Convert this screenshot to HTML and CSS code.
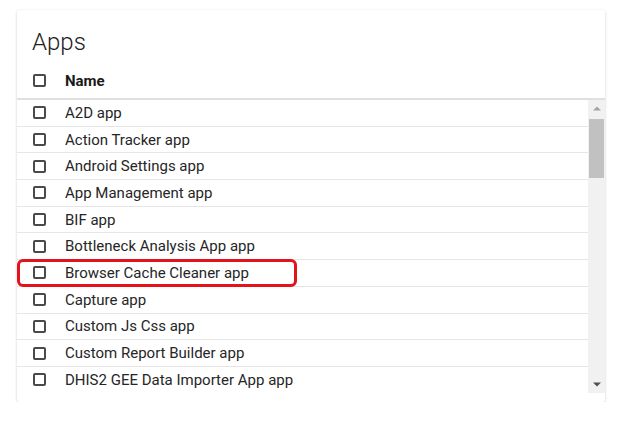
FILE: index.html
```html
<!DOCTYPE html>
<html lang="en">
<head>
<meta charset="utf-8">
<title>Apps</title>
<link rel="stylesheet" href="styles.css">
</head>
<body>
<div class="card">
  <h1 class="title">Apps</h1>
  <div class="head">
    <span class="cb"></span>
    <span class="head-label">Name</span>
  </div>
  <div class="body">
    <div class="list">
      <div class="row"><span class="cb"></span><span class="label">A2D app</span></div>
      <div class="row"><span class="cb"></span><span class="label">Action Tracker app</span></div>
      <div class="row"><span class="cb"></span><span class="label">Android Settings app</span></div>
      <div class="row"><span class="cb"></span><span class="label">App Management app</span></div>
      <div class="row"><span class="cb"></span><span class="label">BIF app</span></div>
      <div class="row"><span class="cb"></span><span class="label">Bottleneck Analysis App app</span></div>
      <div class="row"><span class="cb"></span><span class="label">Browser Cache Cleaner app</span><span class="mark"></span></div>
      <div class="row"><span class="cb"></span><span class="label">Capture app</span></div>
      <div class="row"><span class="cb"></span><span class="label">Custom Js Css app</span></div>
      <div class="row"><span class="cb"></span><span class="label">Custom Report Builder app</span></div>
      <div class="row"><span class="cb"></span><span class="label">DHIS2 GEE Data Importer App app</span></div>
    </div>
    <div class="scrollbar">
      <div class="sb-btn">
        <svg width="8" height="5" viewBox="0 0 8 5"><path d="M0 4.5 L4 0.5 L8 4.5 Z" fill="#a3a3a3"/></svg>
      </div>
      <div class="sb-track"><div class="sb-thumb"></div></div>
      <div class="sb-btn">
        <svg width="8" height="5" viewBox="0 0 8 5"><path d="M0 0.5 L4 4.5 L8 0.5 Z" fill="#505050"/></svg>
      </div>
    </div>
  </div>
</div>
</body>
</html>
```

FILE: styles.css
```css
html, body {
  margin: 0;
  padding: 0;
  background: #ffffff;
}

body {
  font-family: Roboto, "Liberation Sans", Arial, sans-serif;
  color: #212121;
  padding: 10px 18px 0 17px;
}

.card {
  width: 588px;
  height: 392px;
  background: #ffffff;
  border-radius: 2px;
  box-shadow: 0 1px 3px rgba(0, 0, 0, 0.18), 0 0 1px rgba(0, 0, 0, 0.08);
  display: flex;
  flex-direction: column;
}

.title {
  margin: 18px 0 0 15px;
  font-size: 24px;
  line-height: 28px;
  font-weight: 300;
  color: #212121;
}

.head {
  margin-top: 7px;
  height: 35px;
  display: flex;
  align-items: center;
  border-bottom: 2px solid #e0e0e0;
}

.cb {
  flex: none;
  box-sizing: border-box;
  width: 13px;
  height: 13px;
  margin-left: 16px;
  border: 2px solid #4a4a4a;
  border-radius: 2px;
}

.head-label {
  margin-left: 19px;
  font-size: 15px;
  font-weight: 700;
  color: #1a1a1a;
}

.body {
  display: flex;
  height: 293px;
}

.list {
  flex: 1;
  overflow: hidden;
}

.row {
  position: relative;
  box-sizing: border-box;
  height: 26.7px;
  display: flex;
  align-items: center;
  border-bottom: 1px solid #e6e6e6;
}

.label {
  margin-left: 19px;
  font-size: 15px;
  color: #262626;
  white-space: nowrap;
}

.mark {
  position: absolute;
  left: 0;
  top: -1px;
  width: 280px;
  height: 28px;
  box-sizing: border-box;
  border: 3px solid #e3121b;
  border-radius: 6px;
  pointer-events: none;
}

.scrollbar {
  flex: none;
  width: 17px;
  background: #f1f1f1;
  display: flex;
  flex-direction: column;
}

.sb-btn {
  flex: none;
  height: 17px;
  display: flex;
  align-items: center;
  justify-content: center;
}

.sb-btn svg {
  display: block;
}

.sb-track {
  flex: 1;
  padding: 2px 1px 0;
}

.sb-thumb {
  height: 59px;
  background: #c1c1c1;
}
```
